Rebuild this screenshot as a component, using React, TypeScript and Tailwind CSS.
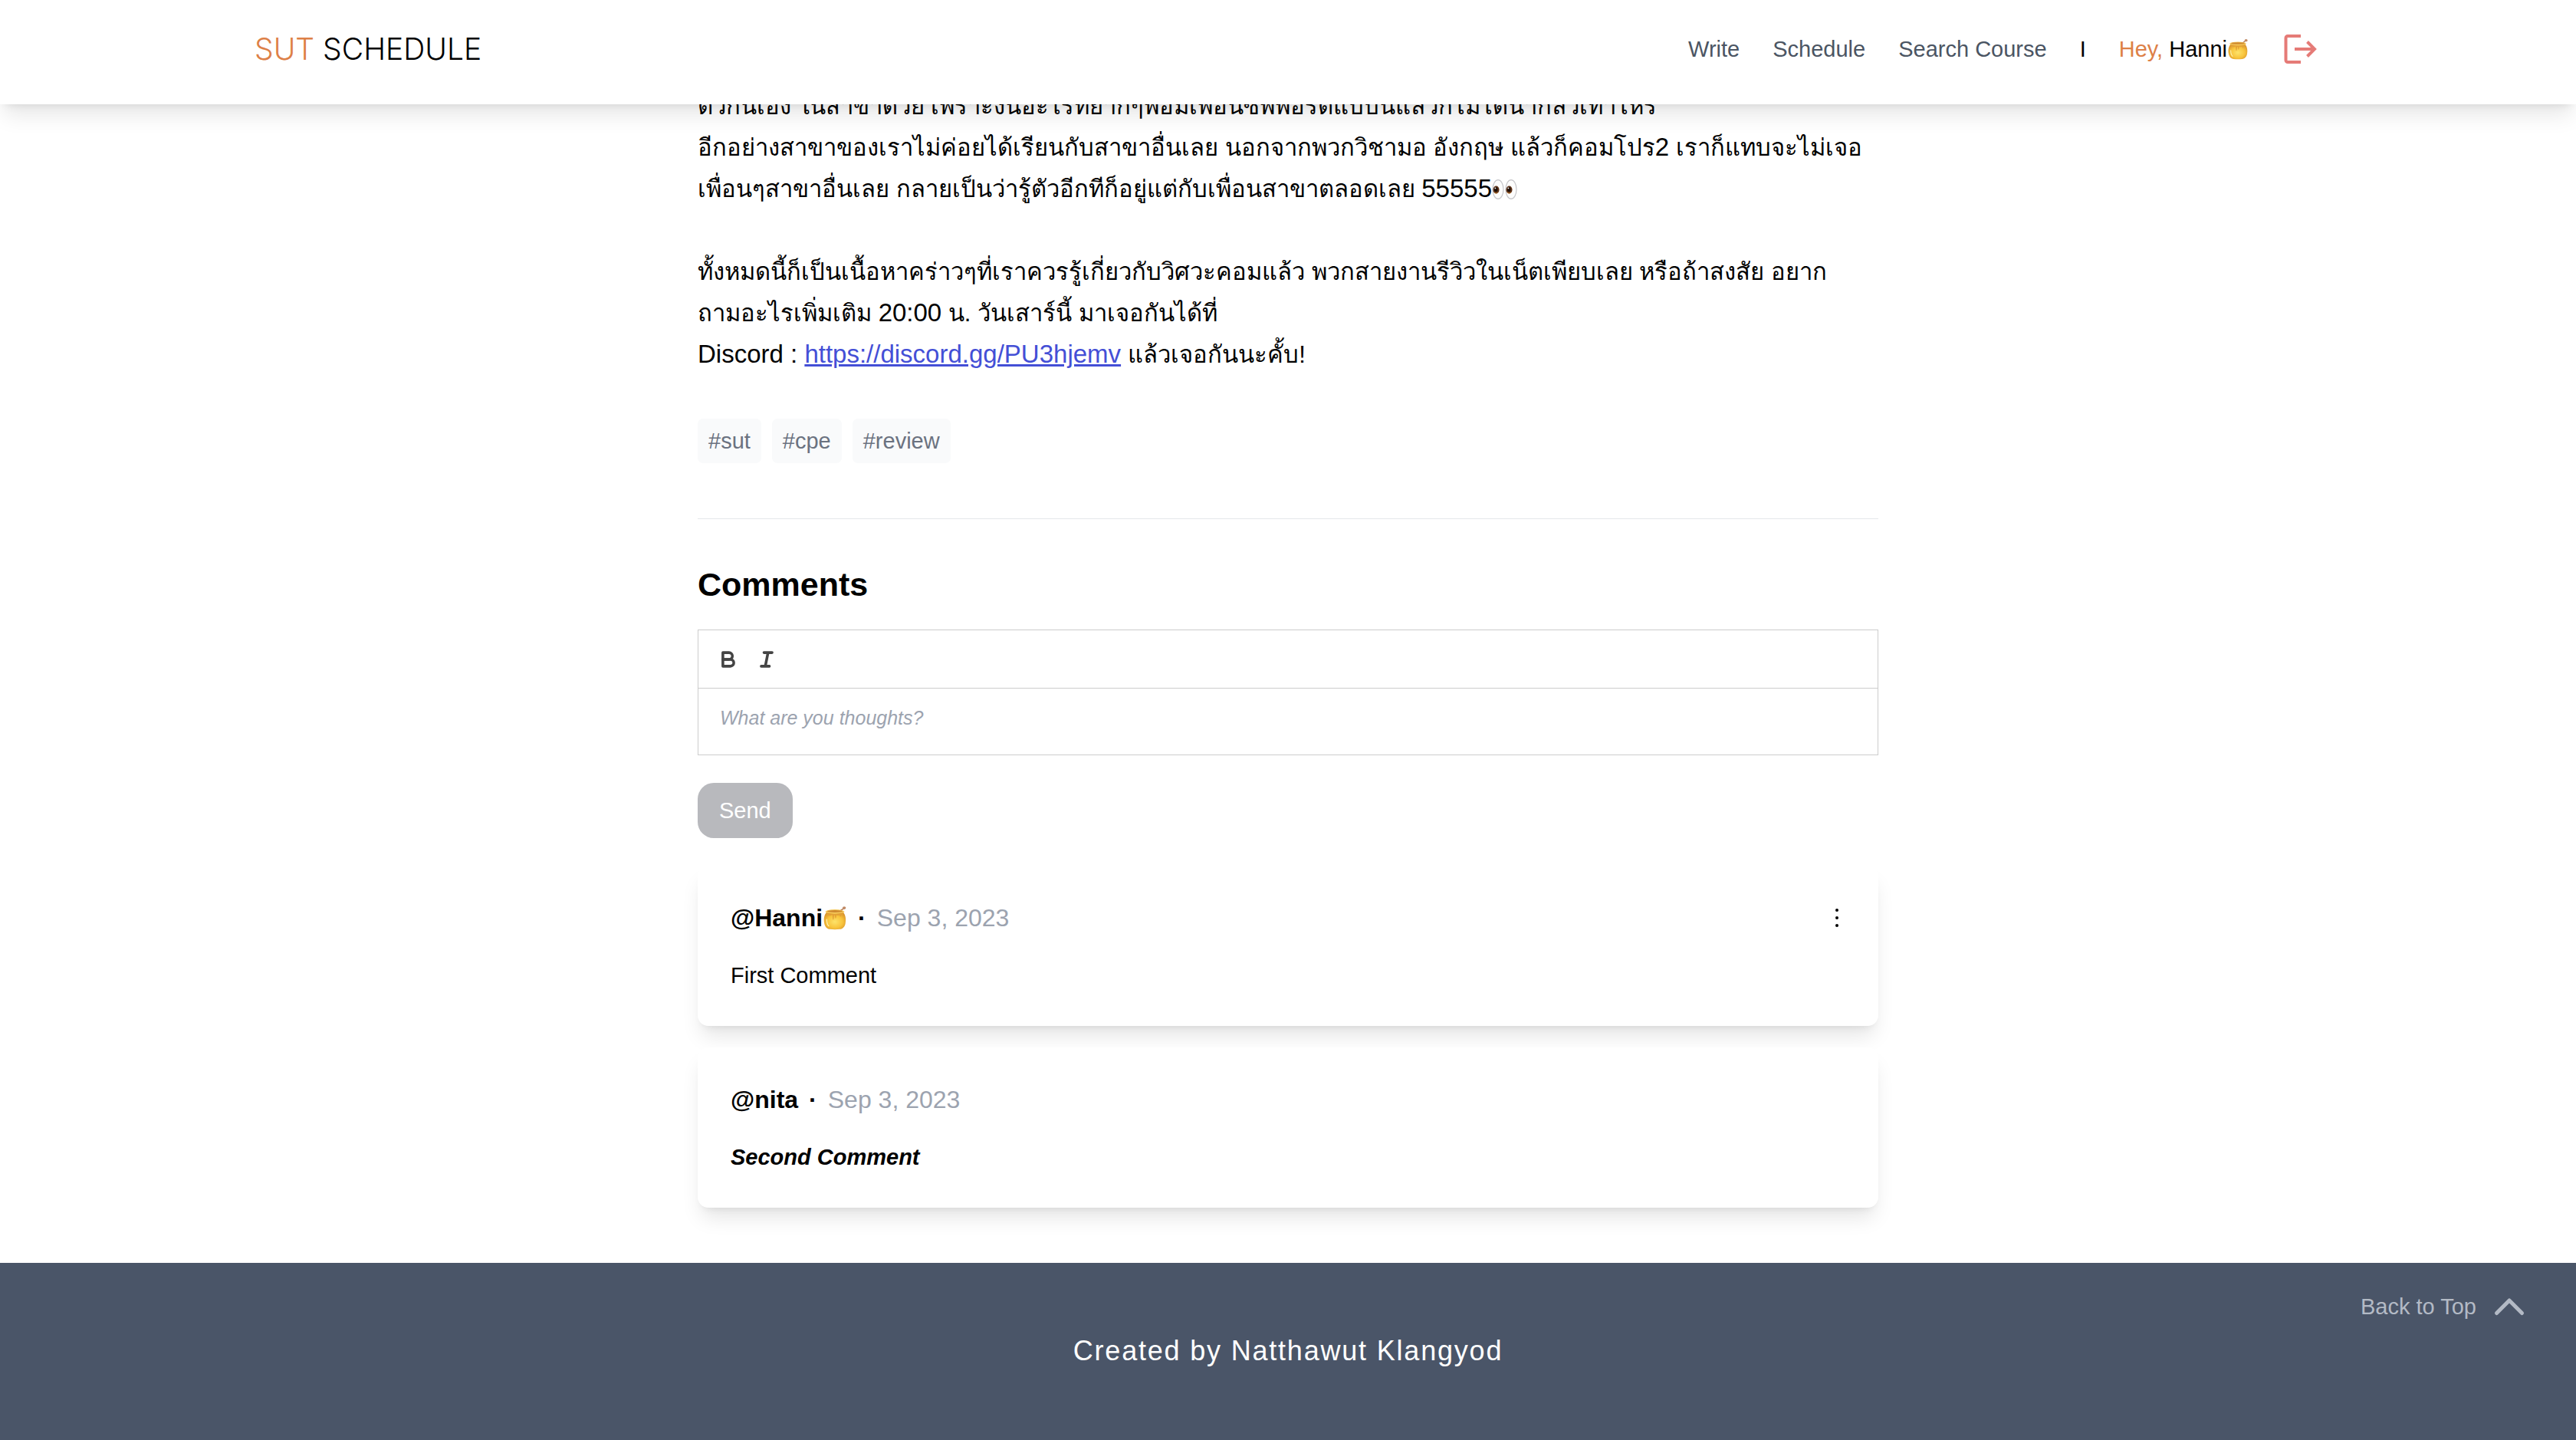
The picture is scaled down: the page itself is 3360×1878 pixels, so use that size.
import React, { ReactNode } from "react";

function HoneyPot({ className = "h-8 w-8" }: { className?: string }) {
  return (
    <svg viewBox="0 0 30 30" className={`inline-block shrink-0 ${className}`} role="img" aria-label="honey pot">
      <defs>
        <radialGradient id="pot" cx="0.5" cy="0.55" r="0.6">
          <stop offset="0" stopColor="#fde36a" />
          <stop offset="0.6" stopColor="#f8c43c" />
          <stop offset="1" stopColor="#d9942a" />
        </radialGradient>
      </defs>
      <path d="M20 7.5 26.2 3.2" stroke="#b98058" strokeWidth="1.6" strokeLinecap="round" />
      <ellipse cx="26.4" cy="2.9" rx="2.1" ry="1.7" fill="#c08a66" />
      <path
        d="M4.6 8.5C1.6 12 1.2 17 2 21.5 2.8 26 5.6 28.6 9 28.9c4 .4 8 .4 12 0 3.6-.4 6.2-3 6.9-7.4.8-4.6.3-9.6-2.5-13z"
        fill="url(#pot)"
      />
      <path
        d="M5 9.500c3 1 17 1 20 0 .6 1.400.4 2.200-.2 2.200-.8 0-.9-.6-1.600-.6-.9 0-.5 2.600-1.400 2.600s-.6-2.200-1.500-2.200c-.8 0-.8.8-1.500.8-.8 0-.6-.8-1.400-.8-.9 0-.6 4.200-1.500 4.200s-.6-4.200-1.500-4.200c-.8 0-.5 6-1.500 6s-.6-6.200-1.500-6.200c-.8 0-1 1-2 .8C4.400 12 4.200 10.800 5 9.500z"
        fill="#e3a136"
      />
      <path d="M5 17c0 4 .8 6.500 2.500 8" stroke="#fdf0b0" strokeWidth="1.200" strokeLinecap="round" fill="none" />
      <ellipse cx="15" cy="7.400" rx="11.600" ry="2.600" fill="#f5c95c" />
      <ellipse cx="15" cy="7" rx="9.600" ry="1.400" fill="#cf8a30" />
    </svg>
  );
}

function Eyes() {
  return (
    <svg viewBox="0 0 33 28" className="inline-block h-7 w-[33px] align-[-4px]" role="img" aria-label="eyes">
      {[8, 25].map((cx) => (
        <g key={cx}>
          <ellipse cx={cx} cy="14" rx="7" ry="12.300" fill="#fdfdfd" stroke="#c4c4c8" strokeWidth="1.200" />
          <ellipse cx={cx - 2.5} cy="14.500" rx="4" ry="5" fill="#5a2f16" />
          <ellipse cx={cx - 2.8} cy="14" rx="2.200" ry="3" fill="#1d0f08" />
          <path d={`M${cx - 5} 18q2.500 2.400 5 0`} stroke="#b9762f" strokeWidth="1" fill="none" />
          <circle cx={cx - 3.6} cy="12.400" r="0.900" fill="#fff" />
        </g>
      ))}
    </svg>
  );
}

function LogoutIcon() {
  return (
    <svg viewBox="0 0 48 48" className="h-12 w-12" fill="none" stroke="#e57b77" strokeWidth="4" aria-hidden="true">
      <path d="M25 7H8a2.500 2.500 0 0 0-2.500 2.500v29A2.500 2.500 0 0 0 8 41h17" />
      <path d="M17 24h25" />
      <path d="M33.500 14.500 43 24l-9.500 9.500" />
    </svg>
  );
}

function BoldIcon() {
  return (
    <svg viewBox="0 0 18 18" className="h-8 w-8" fill="none" stroke="#444" strokeWidth="2" strokeLinecap="round" strokeLinejoin="round" aria-hidden="true">
      <path d="M5,4H9.500A2.500,2.500,0,0,1,12,6.500v0A2.500,2.500,0,0,1,9.500,9H5V4Z" />
      <path d="M5,9h5.500A2.500,2.500,0,0,1,13,11.500v0A2.500,2.500,0,0,1,10.500,14H5V9Z" />
    </svg>
  );
}

function ItalicIcon() {
  return (
    <svg viewBox="0 0 18 18" className="h-8 w-8" fill="none" stroke="#444" strokeWidth="2" strokeLinecap="round" aria-hidden="true">
      <path d="M7 4h6M5 14h6M8 14l2-10" />
    </svg>
  );
}

function Latin({ children }: { children: ReactNode }) {
  return <span className="text-[33px] leading-none">{children}</span>;
}

function Comment({ author, body, menu }: { author: ReactNode; body: ReactNode; menu?: boolean }) {
  return (
    <li className="rounded-[14px] bg-white px-[43px] pt-[41px] pb-[46px] shadow-[0_18px_27px_-5px_rgba(0,0,0,0.1),0_7px_11px_-7px_rgba(0,0,0,0.1)]">
      <div className="flex items-center text-[32px] leading-[54px]">
        <span className="flex items-center font-bold">{author}</span>
        <span className="mx-[14px] font-bold">·</span>
        <time className="text-[#9ca3af]" dateTime="2023-09-03">Sep 3, 2023</time>
        {menu && (
          <button type="button" aria-label="Comment options" className="ml-auto flex h-10 w-[22px] items-center justify-center">
            <svg viewBox="0 0 6 26" className="h-[26px] w-[6px]" aria-hidden="true">
              <circle cx="3" cy="3" r="2" />
              <circle cx="3" cy="13" r="2" />
              <circle cx="3" cy="23" r="2" />
            </svg>
          </button>
        )}
      </div>
      <div className="mt-7 text-[29px] leading-10">{body}</div>
    </li>
  );
}

export default function App() {
  return (
    <div className="flex min-h-screen flex-col bg-white font-['Liberation_Sans',sans-serif] text-black">
      <header className="sticky top-0 z-10 flex h-[136px] items-start justify-between bg-white pt-10 pr-[336px] pl-[332px] shadow-[0_18px_27px_-5px_rgba(0,0,0,0.1),0_7px_11px_-7px_rgba(0,0,0,0.1)]">
        <a href="#" className="font-['Inter',sans-serif] text-[39px] leading-[48px] font-light">
          <span className="text-[#dd8047]">SUT</span> SCHEDULE
        </a>
        <nav className="flex items-center gap-[43px] text-[29px] leading-[46px] text-[#4b5563]">
          <a href="#write">Write</a>
          <a href="#schedule">Schedule</a>
          <a href="#search">Search Course</a>
          <span className="text-black">I</span>
          <span className="flex items-center whitespace-pre text-black">
            <span className="text-[#dd8047]">Hey,</span> Hanni
            <HoneyPot className="h-7 w-7" />
          </span>
          <button type="button" aria-label="Log out">
            <LogoutIcon />
          </button>
        </nav>
      </header>

      <main className="mx-auto -mt-6 w-full max-w-[1540px]">
        <article>
          <p className="text-[31px] leading-[54px]">
            ตัวกันเอง ในสาขาด้วย เพราะงั้นอะไรที่ยากๆพอมีเพื่อนซัพพอร์ตแบบนี้แล้วก็ไม่ได้น่ากลัวเท่าไหร่
            <br />
            อีกอย่างสาขาของเราไม่ค่อยได้เรียนกับสาขาอื่นเลย นอกจากพวกวิชามอ อังกฤษ แล้วก็คอมโปร<Latin>2</Latin> เราก็แทบจะไม่เจอ
            <br />
            เพื่อนๆสาขาอื่นเลย กลายเป็นว่ารู้ตัวอีกทีก็อยู่แต่กับเพื่อนสาขาตลอดเลย <Latin>55555</Latin>
            <Eyes />
          </p>
          <p className="mt-[54px] text-[31px] leading-[54px]">
            ทั้งหมดนี้ก็เป็นเนื้อหาคร่าวๆที่เราควรรู้เกี่ยวกับวิศวะคอมแล้ว พวกสายงานรีวิวในเน็ตเพียบเลย หรือถ้าสงสัย อยาก
            <br />
            ถามอะไรเพิ่มเติม <Latin>20:00</Latin> น. วันเสาร์นี้ มาเจอกันได้ที่
            <br />
            <Latin>
              Discord :{" "}
              <a href="https://discord.gg/PU3hjemv" className="text-[#444fd6] underline">
                https://discord.gg/PU3hjemv
              </a>{" "}
            </Latin>
            แล้วเจอกันนะคั้บ!
          </p>
          <ul className="mt-14 flex gap-[14px] text-[29px] leading-[54px] text-[#6b7280]">
            {["#sut", "#cpe", "#review"].map((tag) => (
              <li key={tag} className="rounded-[7px] bg-[#f9fafb] px-[14px] py-[2px]">
                {tag}
              </li>
            ))}
          </ul>
        </article>

        <hr className="mt-[72px] border-[#e5e7eb]" />

        <section>
          <h2 className="mt-[58px] text-[43px] leading-[54px] font-bold">Comments</h2>
          <form className="mt-8">
            <div className="border border-[#ccc]">
              <div className="flex h-[76px] items-center border-b border-[#ccc] px-[14px]">
                <button type="button" aria-label="Bold" className="px-[9px]">
                  <BoldIcon />
                </button>
                <button type="button" aria-label="Italic" className="px-[9px]">
                  <ItalicIcon />
                </button>
              </div>
              <textarea
                rows={1}
                aria-label="Comment"
                placeholder="What are you thoughts?"
                className="block w-full resize-none overflow-hidden px-7 pt-[18px] pb-7 text-[25px] leading-10 outline-none placeholder:text-[#9ca3af] placeholder:italic"
              />
            </div>
            <button type="submit" disabled className="mt-9 rounded-[21px] bg-[#b8b9bd] px-7 py-[13px] text-[29px] leading-[46px] text-white">
              Send
            </button>
          </form>

          <ul className="mt-9 flex flex-col gap-7">
            <Comment
              menu
              author={
                <>
                  @Hanni
                  <HoneyPot />
                </>
              }
              body="First Comment"
            />
            <Comment author="@nita" body={<strong className="italic">Second Comment</strong>} />
          </ul>
        </section>
      </main>

      <footer className="mt-[72px] flex grow flex-col bg-[#4a5568] px-[66px] pt-[37px]">
        <a href="#" className="flex items-center gap-[22px] self-end text-[29px] leading-10 text-[#b3bac5]">
          Back to Top
          <svg viewBox="0 0 42 28" className="h-7 w-[42px]" fill="none" stroke="currentColor" strokeWidth="5" strokeLinecap="round" strokeLinejoin="round" aria-hidden="true">
            <path d="M4.500 22.500 21 6l16.500 16.500" />
          </svg>
        </a>
        <p className="mt-[11px] pb-[88px] text-center text-[36px] leading-[54px] tracking-wider text-white">
          Created by Natthawut Klangyod
        </p>
      </footer>
    </div>
  );
}
